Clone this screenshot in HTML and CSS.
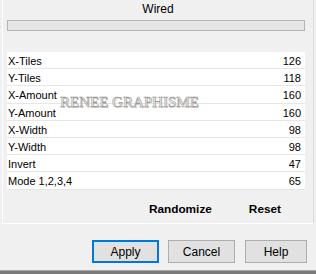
FILE: index.html
```html
<!DOCTYPE html>
<html lang="en">
<head>
    <meta charset="UTF-8">
    <link rel="stylesheet" href="styles.css">
</head>
<body>
    <div class="frame">
        <div class="title">Wired</div>
        <div class="progress"></div>
        <div class="spacer"></div>
        <div class="params">
            <div class="row"><span>X-Tiles</span><span>126</span></div>
            <div class="row"><span>Y-Tiles</span><span>118</span></div>
            <div class="row"><span>X-Amount</span><span>160</span></div>
            <div class="row"><span>Y-Amount</span><span>160</span></div>
            <div class="row"><span>X-Width</span><span>98</span></div>
            <div class="row"><span>Y-Width</span><span>98</span></div>
            <div class="row"><span>Invert</span><span>47</span></div>
            <div class="row"><span>Mode 1,2,3,4</span><span>65</span></div>
            <div class="watermark">RENEE GRAPHISME</div>
        </div>
        <div class="actions">
            <span class="link">Randomize</span>
            <span class="link">Reset</span>
        </div>
    </div>
    <div class="buttons">
        <button class="btn default">Apply</button>
        <button class="btn">Cancel</button>
        <button class="btn help">Help</button>
    </div>
</body>
</html>
```

FILE: styles.css
```css
body {
    margin: 0;
    width: 316px;
    height: 274px;
    overflow: hidden;
    background: #f0f0f0;
    font-family: "Liberation Sans", Arial, sans-serif;
    font-size: 11px;
    color: #000;
    position: relative;
}

.frame {
    margin-left: 2px;
    width: 306px;
    height: 223px;
    border-left: 1px solid #fff;
    border-right: 1px solid #dcdcdc;
    border-bottom: 1px solid #fff;
    padding-left: 4px;
    box-sizing: content-box;
}

.title {
    height: 20px;
    line-height: 18px;
    font-size: 12px;
    text-align: center;
    padding-right: 4px;
}

.progress {
    height: 9px;
    width: 296px;
    border: 1px solid #b4b4b4;
    background: #e6e6e6;
}

.spacer {
    height: 21px;
}

.params {
    position: relative;
    width: 298px;
    background: #fff;
}

.row {
    display: flex;
    justify-content: space-between;
    height: 17.2px;
    line-height: 18px;
    padding: 0 4px 0 1px;
    border-bottom: 1px solid #e6e6e6;
    box-sizing: border-box;
}

.row:last-of-type {
    border-bottom: none;
}

.watermark {
    position: absolute;
    left: 53px;
    top: 42px;
    font-family: "Liberation Serif", serif;
    font-size: 15px;
    color: #fff;
    -webkit-text-stroke: 0.6px #9a9a9a;
    text-shadow: 1px 1px 1px #c8c8c8;
}

.actions {
    display: flex;
    justify-content: flex-end;
    gap: 37px;
    padding: 12px 32px 0 0;
    height: 33px;
    box-sizing: border-box;
    font-size: 11.8px;
    font-weight: bold;
}

.buttons {
    display: flex;
    justify-content: flex-end;
    gap: 9px;
    padding: 16px 9px 0 0;
}

.btn {
    width: 67px;
    height: 23px;
    margin: 0;
    padding: 0;
    font-family: "Liberation Sans", Arial, sans-serif;
    font-size: 12px;
    background: #e1e1e1;
    border: 1px solid #adadad;
    color: #000;
}

.btn.default {
    border: 2px solid #0078d7;
}

.btn.help {
    width: 62px;
    margin-left: 1px;
}

.buttons::after {
    content: "";
    position: absolute;
    left: 0;
    right: 0;
    bottom: 0;
    height: 3px;
    background: #7a7a7a;
    border-top: 1px solid #a8a8a8;
}
```
